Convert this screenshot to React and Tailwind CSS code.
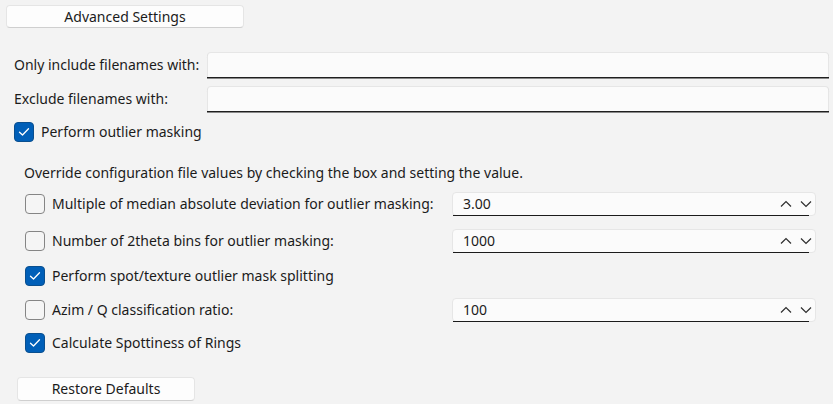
import React from "react";

function CheckBox({ checked }) {
  if (checked) {
    return (
      <span className="flex h-[20px] w-[20px] shrink-0 items-center justify-center rounded-[4px] border border-[#0a4f8f] bg-[#005fb8]">
        <svg width="12" height="10" viewBox="0 0 12 10" fill="none">
          <path d="M1.5 5.2 L4.5 8 L10.5 1.8" stroke="#ffffff" strokeWidth="1.3" strokeLinecap="round" strokeLinejoin="round" />
        </svg>
      </span>
    );
  }
  return <span className="h-[20px] w-[20px] shrink-0 rounded-[4px] border border-[#858585] bg-[#f5f5f5]" />;
}

function Chevrons() {
  return (
    <div className="flex items-center gap-[8px] pr-[3px]">
      <svg width="12" height="8" viewBox="0 0 12 8" fill="none">
        <path d="M1 6.5 L6 1.5 L11 6.5" stroke="#2e2e2e" strokeWidth="1.2" />
      </svg>
      <svg width="12" height="8" viewBox="0 0 12 8" fill="none">
        <path d="M1 1.5 L6 6.5 L11 1.5" stroke="#2e2e2e" strokeWidth="1.2" />
      </svg>
    </div>
  );
}

function SpinBox({ value }) {
  return (
    <div className="relative flex h-[24px] w-[364px] items-center justify-between rounded-[4px] border border-[#e6e6e6] bg-[#fbfbfb] pl-[10px]">
      <span className="text-[14px] text-[#1b1b1b]">{value}</span>
      <Chevrons />
      <div className="absolute bottom-[-1px] left-[0px] right-[6px] h-[1.5px] bg-[#1b1b1b]" />
    </div>
  );
}

function TextField() {
  return (
    <div className="h-[25px] flex-1 rounded-t-[4px] border border-b-0 border-[#e6e6e6] bg-[#fbfbfb] shadow-[0_1.5px_0_#1f1f1f]" />
  );
}

function OverrideRow({ checked, label, value, className }) {
  return (
    <div className={`flex h-[24px] items-center ${className}`}>
      <div className="flex w-[427px] items-center gap-[7px]">
        <CheckBox checked={checked} />
        <span>{label}</span>
      </div>
      {value !== undefined ? <SpinBox value={value} /> : null}
    </div>
  );
}

export default function App() {
  return (
    <div className="flex h-[404px] w-[833px] flex-col bg-[#f3f3f3] text-[14px] leading-[20px] text-[#1b1b1b] [font-family:'Noto_Sans','Open_Sans',sans-serif]">
      <button className="ml-[6px] mt-[5px] h-[23px] w-[238px] rounded-[4px] border border-[#e5e5e5] border-b-[#cfcfcf] bg-[#fdfdfd] text-[14px] leading-[20px] text-[#1b1b1b]">
        Advanced Settings
      </button>

      <div className="mt-[24px] flex items-center pl-[14px] pr-[4px]">
        <span className="w-[193px]">Only include filenames with:</span>
        <TextField />
      </div>
      <div className="mt-[9px] flex items-center pl-[14px] pr-[4px]">
        <span className="w-[193px]">Exclude filenames with:</span>
        <TextField />
      </div>

      <div className="mt-[11px] flex items-center gap-[7px] pl-[14px]">
        <CheckBox checked />
        <span>Perform outlier masking</span>
      </div>

      <div className="mt-[21px] pl-[24px]">Override configuration file values by checking the box and setting the value.</div>

      <div className="flex flex-col pl-[25px]">
        <OverrideRow className="mt-[9px]" label="Multiple of median absolute deviation for outlier masking:" value="3.00" />
        <OverrideRow className="mt-[13px]" label="Number of 2theta bins for outlier masking:" value="1000" />
        <OverrideRow className="mt-[11px]" checked label="Perform spot/texture outlier mask splitting" />
        <OverrideRow className="mt-[10px]" label="Azim / Q classification ratio:" value="100" />
        <OverrideRow className="mt-[9px]" checked label="Calculate Spottiness of Rings" />
      </div>

      <button className="ml-[17px] mt-[22px] h-[24px] w-[178px] rounded-[4px] border border-[#e5e5e5] border-b-[#cfcfcf] bg-[#fdfdfd] text-[14px] leading-[20px] text-[#1b1b1b]">
        Restore Defaults
      </button>
    </div>
  );
}
